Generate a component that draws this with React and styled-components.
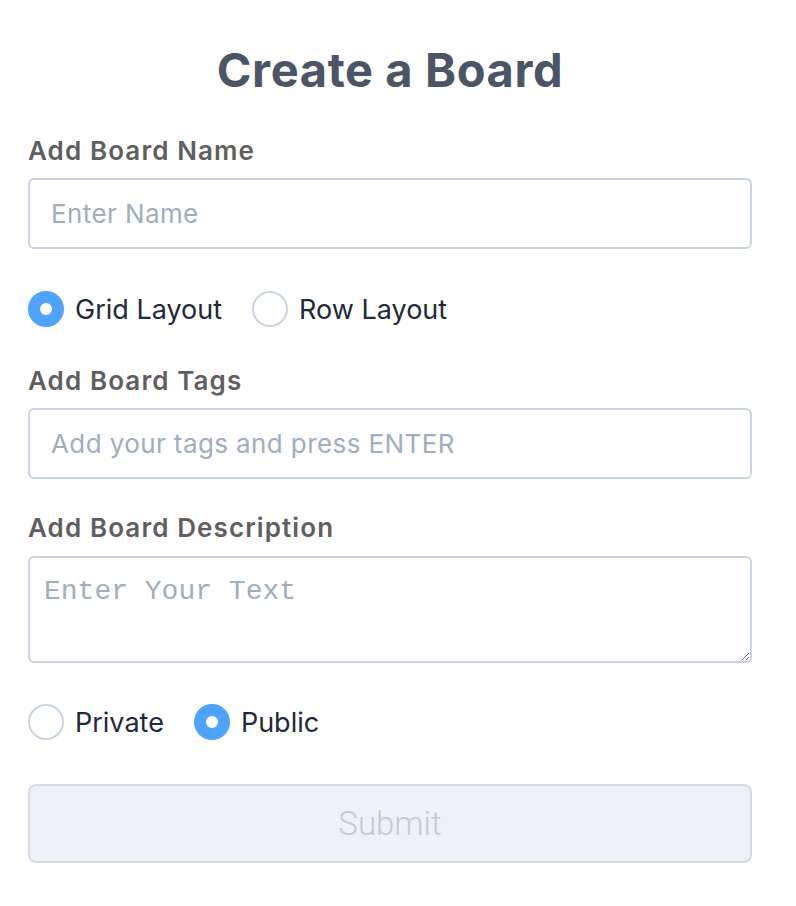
import React from 'react'
import styled, { createGlobalStyle } from 'styled-components'

const GlobalStyle = createGlobalStyle`
  body {
    margin: 0;
    background: #ffffff;
    font-family: Inter, "Open Sans", sans-serif;
  }
`

const Form = styled.form`
  display: flex;
  flex-direction: column;
  width: 724px;
  margin-left: 28px;
  padding-top: 42px;
`

const Title = styled.h1`
  margin: 0;
  text-align: center;
  font-size: 47px;
  line-height: 56px;
  font-weight: 700;
  color: #4a5568;
  letter-spacing: 0.6px;
`

const Label = styled.label`
  display: block;
  margin-top: ${props => props.top}px;
  font-size: 26px;
  line-height: 30px;
  font-weight: 600;
  letter-spacing: 1.1px;
  color: #5f5f5f;
`

const TextInput = styled.input`
  box-sizing: border-box;
  width: 100%;
  height: 71px;
  margin-top: 12px;
  padding: 0 21px;
  border: 2px solid #cbd5e1;
  border-radius: 6px;
  font-family: Inter, "Open Sans", sans-serif;
  font-size: 26px;
  letter-spacing: 0.4px;
  color: #1e293b;
  outline: none;
  &::placeholder {
    color: #a0aec0;
  }
`

const TextArea = styled.textarea`
  box-sizing: border-box;
  display: block;
  width: 100%;
  height: 107px;
  margin-top: 13px;
  padding: 17px 14px 14px;
  border: 2px solid #cbd5e1;
  border-radius: 6px;
  font-family: "Liberation Mono", monospace;
  font-size: 28px;
  line-height: 1.2;
  outline: none;
  &::placeholder {
    color: #a0aec0;
  }
`

const RadioRow = styled.div`
  display: flex;
  align-items: center;
  gap: 30px;
  height: 36px;
  margin-top: ${props => props.top}px;
`

const RadioOption = styled.label`
  display: flex;
  align-items: center;
  gap: 11px;
  font-size: 27px;
  color: #1e293b;
  cursor: pointer;
`

const Circle = styled.span`
  box-sizing: border-box;
  display: flex;
  align-items: center;
  justify-content: center;
  width: 36px;
  height: 36px;
  border-radius: 50%;
  background: ${props => (props.checked ? '#4da3fd' : '#ffffff')};
  border: ${props => (props.checked ? 'none' : '2px solid #cbd5e1')};
  &::after {
    content: '';
    display: ${props => (props.checked ? 'block' : 'none')};
    width: 12px;
    height: 12px;
    border-radius: 50%;
    background: #ffffff;
  }
`

const SubmitButton = styled.button`
  box-sizing: border-box;
  width: 100%;
  height: 79px;
  margin-top: 44px;
  border: 2px solid #d5dae3;
  border-radius: 8px;
  background: #eff1f6;
  font-family: Roboto, "Liberation Sans", sans-serif;
  font-size: 33px;
  font-weight: 300;
  color: #c2cad7;
`

const Radio = ({ checked, children }) => (
  <RadioOption>
    <Circle checked={checked} />
    {children}
  </RadioOption>
)

const App = () => (
  <>
    <GlobalStyle />
    <Form onSubmit={e => e.preventDefault()}>
      <Title>Create a Board</Title>
      <Label top={38}>Add Board Name</Label>
      <TextInput placeholder="Enter Name" />
      <RadioRow top={42}>
        <Radio checked>Grid Layout</Radio>
        <Radio>Row Layout</Radio>
      </RadioRow>
      <Label top={39}>Add Board Tags</Label>
      <TextInput placeholder="Add your tags and press ENTER" />
      <Label top={34}>Add Board Description</Label>
      <TextArea placeholder="Enter Your Text" />
      <RadioRow top={41}>
        <Radio>Private</Radio>
        <Radio checked>Public</Radio>
      </RadioRow>
      <SubmitButton type="submit" disabled>
        Submit
      </SubmitButton>
    </Form>
  </>
)

export default App
